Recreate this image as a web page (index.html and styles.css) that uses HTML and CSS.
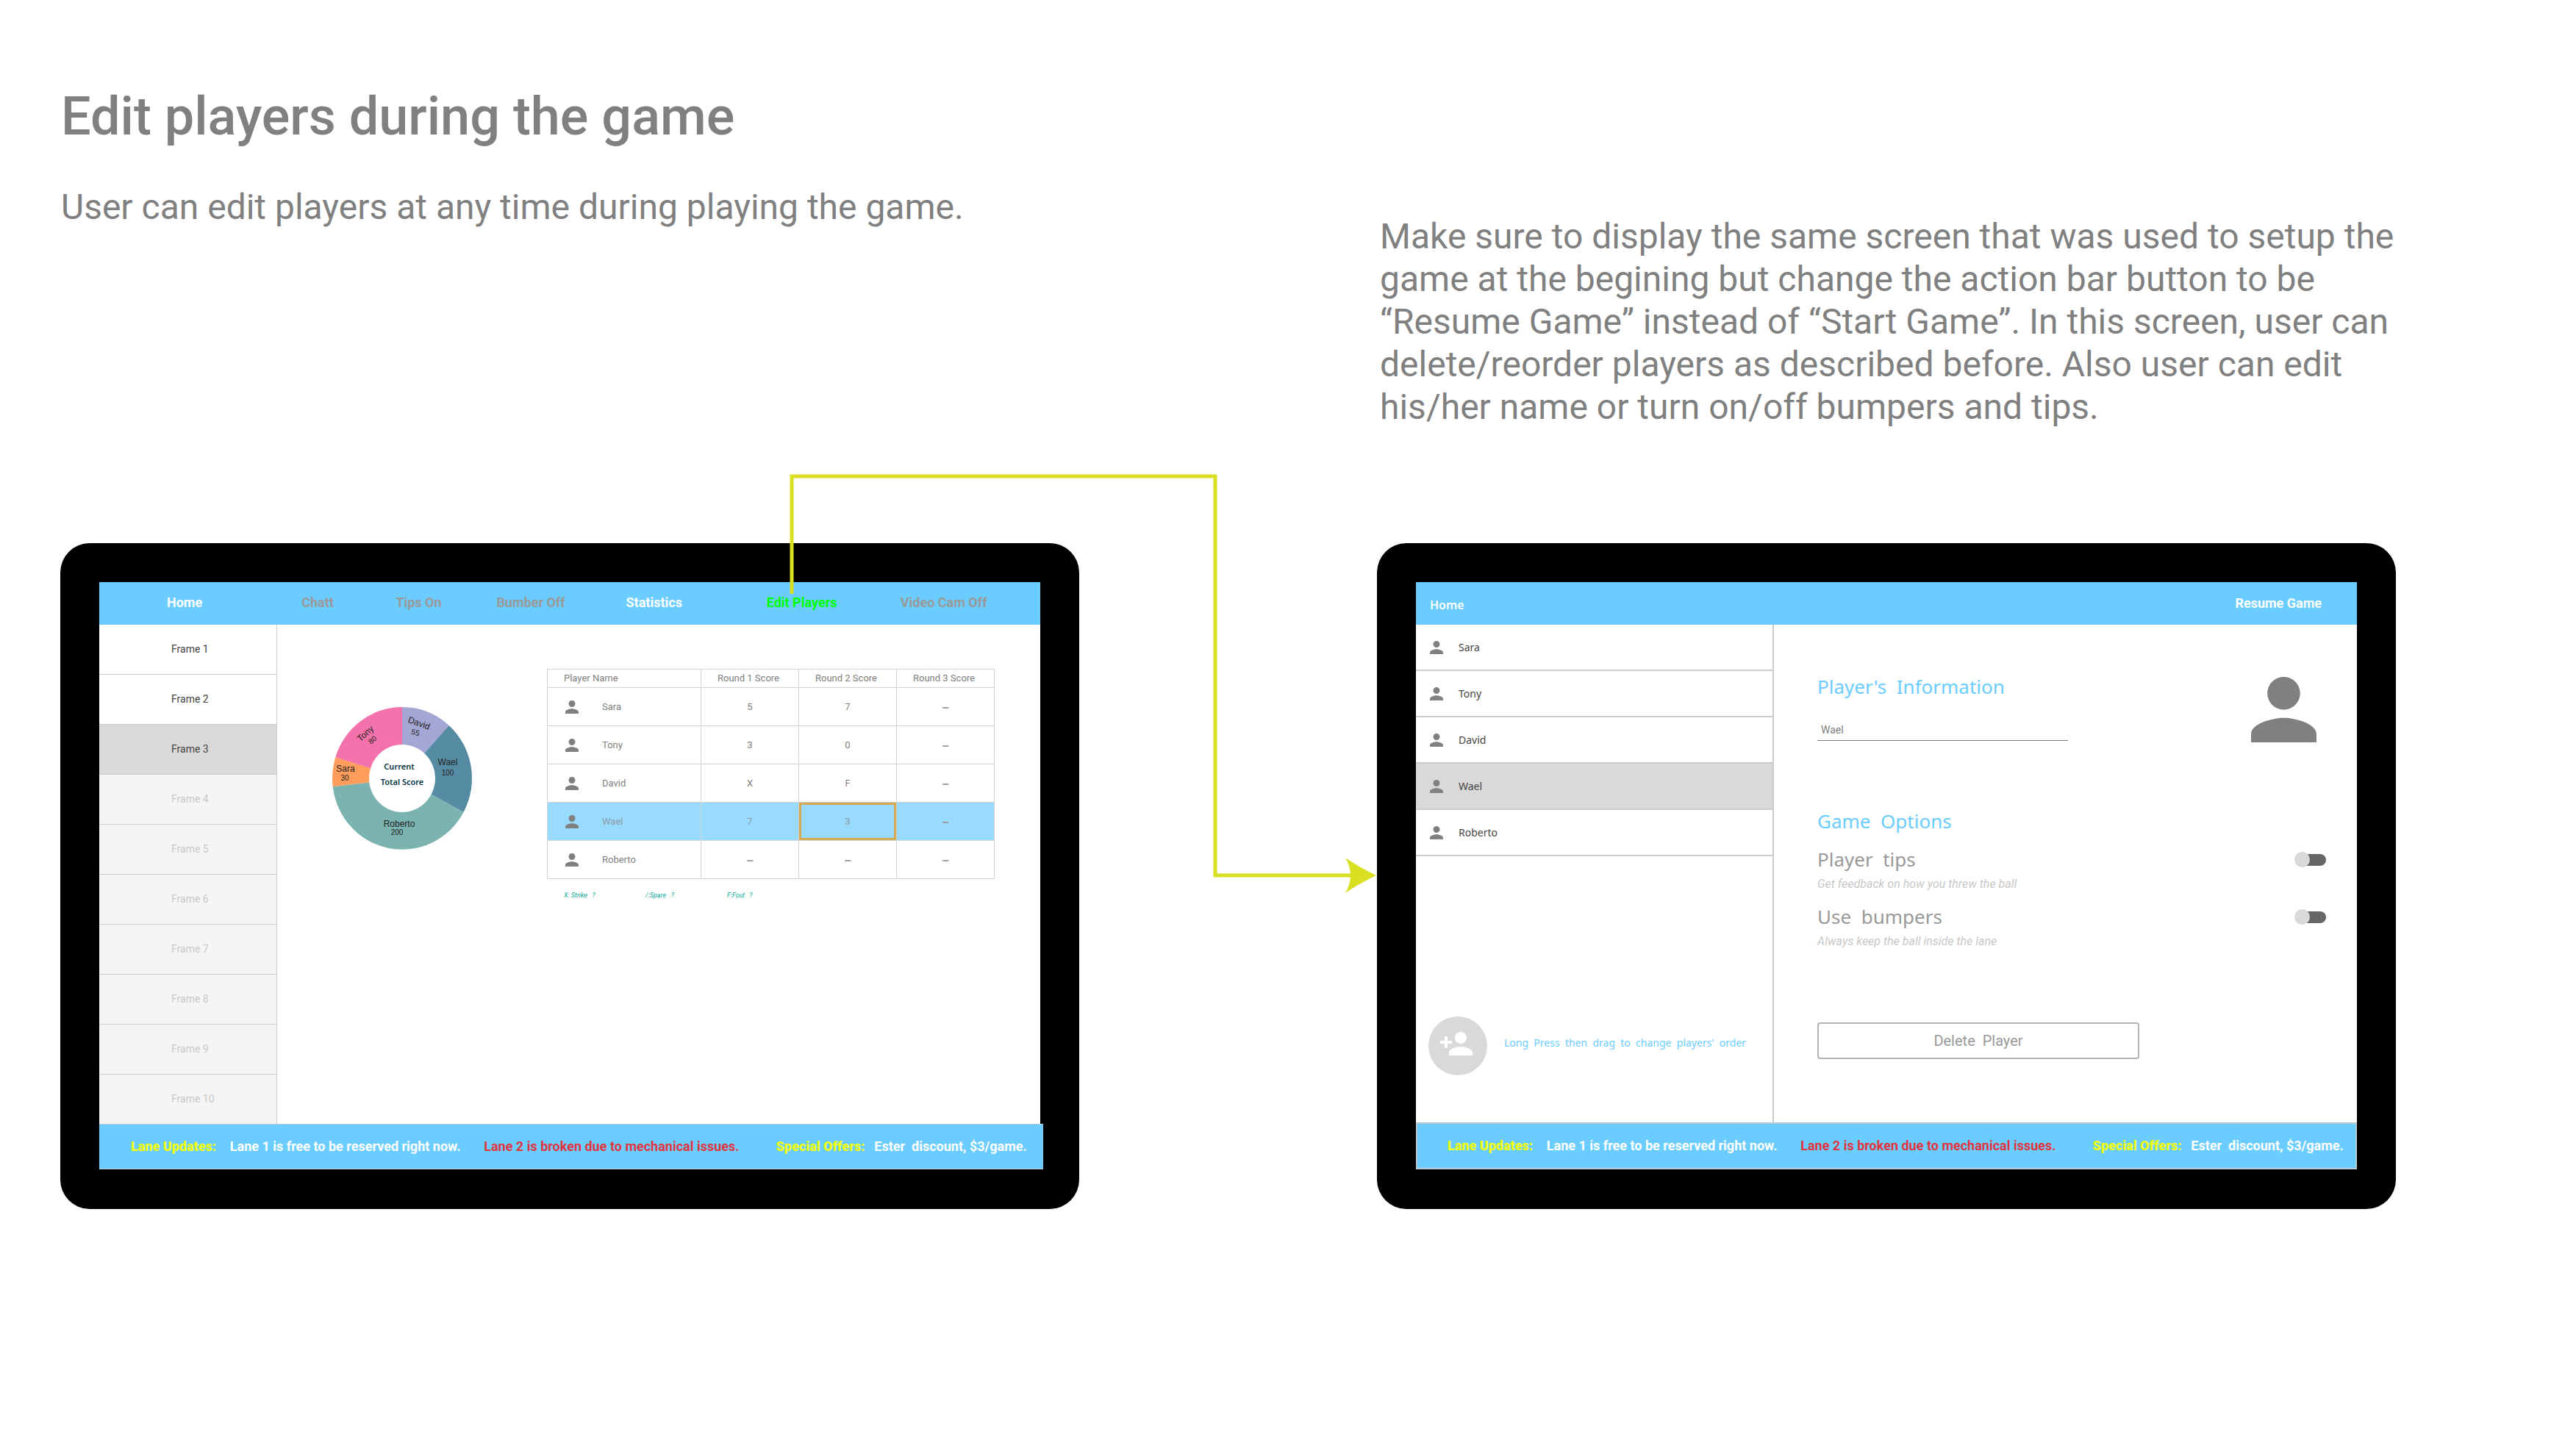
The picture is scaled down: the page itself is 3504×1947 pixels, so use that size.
FILE: index.html
```html
<!DOCTYPE html>
<html lang="en">
<head>
<meta charset="utf-8">
<title>Edit players during the game</title>
<link rel="stylesheet" href="styles.css">
</head>
<body>
<svg class="symbols" aria-hidden="true">
  <symbol id="person" viewBox="4 4 16 16"><path d="M12 12c2.21 0 4-1.79 4-4s-1.79-4-4-4-4 1.79-4 4 1.79 4 4 4zm0 2c-2.67 0-8 1.34-8 4v2h16v-2c0-2.66-5.33-4-8-4z"/></symbol>
</svg>
<main class="board">
  <header class="note">
    <h1>Edit players during the game</h1>
    <p>User can edit players at any time during playing the game.</p>
  </header>
  <div class="note note-right">
    <p>Make sure to display the same screen that was used to setup the game at the begining but change the action bar button to be “Resume Game” instead of “Start Game”. In this screen, user can delete/reorder players as described before. Also user can edit his/her name or turn on/off bumpers and tips.</p>
  </div>

  <section class="tablet" aria-label="Statistics screen">
    <nav class="bar menu">
      <a class="on" href="#home">Home</a>
      <a href="#chatt">Chatt</a>
      <a href="#tips">Tips On</a>
      <a href="#bumber">Bumber Off</a>
      <a class="on" href="#statistics">Statistics</a>
      <a class="target" href="#edit">Edit Players</a>
      <a href="#video">Video Cam Off</a>
    </nav>
    <div class="screen">
      <div class="frames">
        <button>Frame 1</button>
        <button>Frame 2</button>
        <button class="selected">Frame 3</button>
        <button disabled>Frame 4</button>
        <button disabled>Frame 5</button>
        <button disabled>Frame 6</button>
        <button disabled>Frame 7</button>
        <button disabled>Frame 8</button>
        <button disabled>Frame 9</button>
        <button disabled>Frame 10</button>
      </div>
      <div class="stats">
        <svg class="donut" viewBox="0 0 190 194" role="img" aria-label="Current total score">
          <path fill="#a4a6d3" d="M95 97V0A95 97 0 0 1 158.6 24.9Z"/>
          <path fill="#568ca3" d="M95 97L158.6 24.9A95 97 0 0 1 178.6 143Z"/>
          <path fill="#7ab3af" d="M95 97L178.6 143A95 97 0 0 1 .7 108.3Z"/>
          <path fill="#ff9d5c" d="M95 97L.7 108.3A95 97 0 0 1 4.3 68.2Z"/>
          <path fill="#f472ab" d="M95 97L4.3 68.2A95 97 0 0 1 95 0Z"/>
          <ellipse cx="95" cy="97" rx="45" ry="46" fill="#fff"/>
          <g class="slice">
            <text transform="translate(118 22) rotate(20)" y="4">David</text>
            <text class="points" transform="translate(113 35) rotate(15)" y="3">55</text>
            <text x="157" y="79">Wael</text>
            <text class="points" x="157" y="93">100</text>
            <text x="91" y="163">Roberto</text>
            <text class="points" x="88" y="174">200</text>
            <text x="18" y="88">Sara</text>
            <text class="points" x="17" y="100">30</text>
            <text transform="translate(45 36) rotate(-42)" y="4">Tony</text>
            <text class="points" transform="translate(55 45) rotate(-42)" y="3">80</text>
          </g>
          <text class="total" x="91" y="85">Current</text>
          <text class="total" x="95" y="106">Total Score</text>
        </svg>
        <div class="scores">
          <table>
            <colgroup><col class="col-name"><col><col><col></colgroup>
            <thead>
              <tr><th>Player Name</th><th>Round 1 Score</th><th>Round 2 Score</th><th>Round 3 Score</th></tr>
            </thead>
            <tbody>
              <tr><td><span class="who"><svg><use href="#person"/></svg>Sara</span></td><td>5</td><td>7</td><td class="none">–</td></tr>
              <tr><td><span class="who"><svg><use href="#person"/></svg>Tony</span></td><td>3</td><td>0</td><td class="none">–</td></tr>
              <tr><td><span class="who"><svg><use href="#person"/></svg>David</span></td><td>X</td><td>F</td><td class="none">–</td></tr>
              <tr class="current"><td><span class="who"><svg><use href="#person"/></svg>Wael</span></td><td>7</td><td class="active">3</td><td class="none">–</td></tr>
              <tr><td><span class="who"><svg><use href="#person"/></svg>Roberto</span></td><td class="none">–</td><td class="none">–</td><td class="none">–</td></tr>
            </tbody>
          </table>
          <div class="legend">
            <span>X: Strike&nbsp;&nbsp; ?</span>
            <span>/:Spare&nbsp;&nbsp; ?</span>
            <span>F:Foul&nbsp;&nbsp; ?</span>
          </div>
        </div>
      </div>
    </div>
    <footer class="bar ticker ticker-wide">
      <strong>Lane Updates:</strong>
      <span>Lane 1 is free to be reserved right now.</span>
      <span class="alert">Lane 2 is broken due to mechanical issues.</span>
      <strong>Special Offers:</strong>
      <span>Ester&nbsp; discount, $3/game.</span>
    </footer>
    <svg class="connector" viewBox="0 0 800 570" aria-hidden="true">
      <path d="M5 163V3H581V546H766" fill="none" stroke="#d9e021" stroke-width="5"/>
      <path d="M800 546Q777 535 758 522Q765 534 765 546Q765 558 758 570Q777 557 800 546Z" fill="#d9e021"/>
    </svg>
  </section>

  <section class="tablet" aria-label="Edit players screen">
    <nav class="bar actions">
      <a href="#home">Home</a>
      <button>Resume Game</button>
    </nav>
    <div class="screen">
      <div class="roster">
        <button><svg><use href="#person"/></svg>Sara</button>
        <button><svg><use href="#person"/></svg>Tony</button>
        <button><svg><use href="#person"/></svg>David</button>
        <button class="selected"><svg><use href="#person"/></svg>Wael</button>
        <button><svg><use href="#person"/></svg>Roberto</button>
        <div class="reorder">
          <button class="add" aria-label="Add player"><svg viewBox="0 0 24 24"><path d="M15 12c2.21 0 4-1.79 4-4s-1.79-4-4-4-4 1.79-4 4 1.79 4 4 4zm-9-2V7H4v3H1v2h3v3h2v-3h3v-2H6zm9 4c-2.67 0-8 1.34-8 4v2h16v-2c0-2.66-5.33-4-8-4z"/></svg></button>
          <p>Long&nbsp; Press&nbsp; then&nbsp; drag&nbsp; to&nbsp; change&nbsp; players'&nbsp; order</p>
        </div>
      </div>
      <form class="details">
        <div class="info">
          <div>
            <h2><label for="player">Player's&nbsp; Information</label></h2>
            <input id="player" class="name" type="text" value="Wael">
          </div>
          <svg class="avatar"><use href="#person"/></svg>
        </div>
        <h2>Game&nbsp; Options</h2>
        <div class="option">
          <label for="tips">Player&nbsp; tips</label>
          <input id="tips" class="toggle" type="checkbox">
          <p>Get feedback on how you threw the ball</p>
        </div>
        <div class="option">
          <label for="bumpers">Use&nbsp; bumpers</label>
          <input id="bumpers" class="toggle" type="checkbox">
          <p>Always keep the ball inside the lane</p>
        </div>
        <button class="delete" type="button">Delete&nbsp; Player</button>
      </form>
    </div>
    <footer class="bar ticker ticker-framed">
      <strong>Lane Updates:</strong>
      <span>Lane 1 is free to be reserved right now.</span>
      <span class="alert">Lane 2 is broken due to mechanical issues.</span>
      <strong>Special Offers:</strong>
      <span>Ester&nbsp; discount, $3/game.</span>
    </footer>
  </section>
</main>
</body>
</html>
```
FILE: styles.css
```css
* { box-sizing: border-box; }
body, h1, h2, p { margin: 0; }
body {
  background: #fff;
  color: #808080;
  font: 14px/20px Roboto, "Liberation Sans", sans-serif;
}
button, input { font: inherit; color: inherit; }
button { border: 0; background: none; padding: 0; text-align: left; cursor: pointer; }
a { color: inherit; text-decoration: none; }
svg { display: block; flex: none; fill: #808080; }
.symbols { position: absolute; width: 0; height: 0; }

/* Board */
.board {
  display: grid;
  grid-template-columns: 1fr 1fr;
  column-gap: 405px;
  padding: 116px 245px 116px 82px;
}
.note { padding: 1px 0 156px 1px; }
.note h1 { margin-bottom: 52px; font-size: 72px; line-height: 84px; font-weight: 500; }
.note p { font-size: 48px; line-height: 58px; }
.note-right { padding: 177px 0 156px 4px; }

/* Tablet shell */
.tablet {
  position: relative;
  display: flex;
  flex-direction: column;
  padding: 53px 53px 54px;
  border-radius: 40px;
  background: #000;
}
.bar {
  background: #6bcdff;
  color: #fff;
  font-size: 18px;
  font-weight: 700;
  align-items: center;
}
.screen { display: flex; flex: 1; background: #fff; }
.connector {
  position: absolute;
  top: -94px;
  right: -404px;
  width: 800px;
  height: 570px;
}

/* Top bars */
.menu {
  display: grid;
  grid-template-columns: 183fr 128fr 137fr 176fr 191fr 182fr 190fr;
  height: 58px;
  padding: 0 0 2px 92px;
  color: #999;
}
.menu .on { color: #fff; }
.menu .target { color: #0f0; }
.actions {
  display: flex;
  justify-content: space-between;
  height: 58px;
  padding: 0 48px 0 19px;
}
.actions a { padding-top: 4px; font: 600 16px/20px "Noto Sans", sans-serif; }

/* Bottom ticker */
.ticker {
  display: grid;
  grid-template-columns: 135fr 346fr 398fr 134fr 224fr;
  padding-left: 43px;
  border-top: 1px solid #c4ccd0;
  white-space: nowrap;
}
.ticker strong { color: #f0ff10; }
.ticker .alert { color: #e0353f; }
.ticker-wide { height: 62px; margin-right: -4px; padding-right: 6px; border-bottom: 1px solid #c4ccd0; }
.ticker-framed { height: 64px; padding-left: 41px; border: 2px solid #b9cbd5; }

/* Frame list */
.frames {
  display: flex;
  flex-direction: column;
  width: 242px;
  border-right: 1px solid #ccc;
}
.frames button {
  height: 68px;
  padding: 0 0 2px 98px;
  border-bottom: 1px solid #ccc;
  color: #444;
}
.frames button:last-child { height: 67px; border-bottom: 0; }
.frames button:disabled { background: #f5f5f5; color: #c8c8c8; }
.frames .selected { background: #d9d9d9; }

/* Statistics */
.stats { display: flex; flex: 1; align-items: flex-start; padding: 60px 62px 0 75px; }
.donut { width: 190px; height: 194px; margin: 52px 102px 0 0; }
.slice text { fill: #222; font: 12px "Liberation Sans", sans-serif; text-anchor: middle; }
.slice .points { font-size: 10px; }
.donut .total { fill: #033344; font: 600 11px "Noto Sans", sans-serif; text-anchor: middle; }
.scores { flex: 1; }
table { width: 100%; border-collapse: collapse; table-layout: fixed; font-size: 13px; line-height: 16px; }
.col-name { width: 209px; }
th, td { border: 1px solid #d4d4d4; padding: 0; }
th { height: 25px; padding-left: 22px; font-weight: 400; text-align: left; }
td { height: 52px; text-align: center; }
.who { display: flex; align-items: center; gap: 32px; padding-left: 24px; }
.who svg { width: 18px; height: 18px; }
.none { padding-top: 5px; color: #999; font-size: 16px; font-weight: 700; }
.current { background: #99dbff; color: #8a9ba5; }
.active { box-shadow: inset 0 0 0 3px #d5a94f; }
.legend {
  display: grid;
  grid-template-columns: repeat(3, 111px);
  padding: 12px 0 0 23px;
  color: #00a896;
  font-size: 9px;
  font-style: italic;
}

/* Player list */
.roster {
  display: flex;
  flex-direction: column;
  width: 487px;
  border-right: 2px solid #ccc;
  color: #444;
  font-family: "Noto Sans", sans-serif;
}
.roster > button {
  display: flex;
  align-items: center;
  gap: 21px;
  height: 63px;
  padding-left: 19px;
  border-bottom: 2px solid #ccc;
}
.roster > button svg { width: 18px; height: 18px; }
.roster .selected { background: #d9d9d9; }
.reorder {
  display: flex;
  align-items: center;
  gap: 23px;
  margin-top: auto;
  padding: 0 0 64px 17px;
  color: #6bcdff;
}
.reorder p { padding-bottom: 8px; }
.add { width: 80px; height: 80px; padding: 13px 18px 19px 14px; border-radius: 50%; background: #d9d9d9; }
.add svg { width: 48px; height: 48px; fill: #fff; }

/* Player details */
.details { flex: 1; padding: 66px 42px 0 59px; }
.details h2, .option label {
  font: 400 26px/36px "Noto Sans", sans-serif;
}
.details h2 { color: #6bcdff; }
.info { display: flex; justify-content: space-between; margin-bottom: 89px; }
.name {
  width: 341px;
  height: 34px;
  margin-top: 22px;
  padding: 4px 5px 0;
  border: 0;
  border-bottom: 1px solid #777;
  background: none;
}
.avatar { width: 89px; height: 89px; margin: 5px 13px 0 0; }
.option {
  display: grid;
  grid-template-columns: 1fr auto;
  align-items: center;
  row-gap: 6px;
  margin-top: 16px;
  color: #999;
}
.option p { color: #c8c8c8; font-size: 16px; font-style: italic; }
.toggle {
  position: relative;
  appearance: none;
  width: 43px;
  height: 21px;
  margin: 0;
}
.toggle::before, .toggle::after { content: ""; position: absolute; }
.toggle::before { inset: 3px 0 2px 10px; border-radius: 8px; background: #666; }
.toggle::after { inset: 0 22px 0 0; border-radius: 50%; background: #d9d9d9; }
.delete {
  width: 438px;
  height: 50px;
  margin-top: 100px;
  border: 2px solid #b3b3b3;
  border-radius: 4px;
  color: #999;
  font-size: 20px;
  text-align: center;
}
```
